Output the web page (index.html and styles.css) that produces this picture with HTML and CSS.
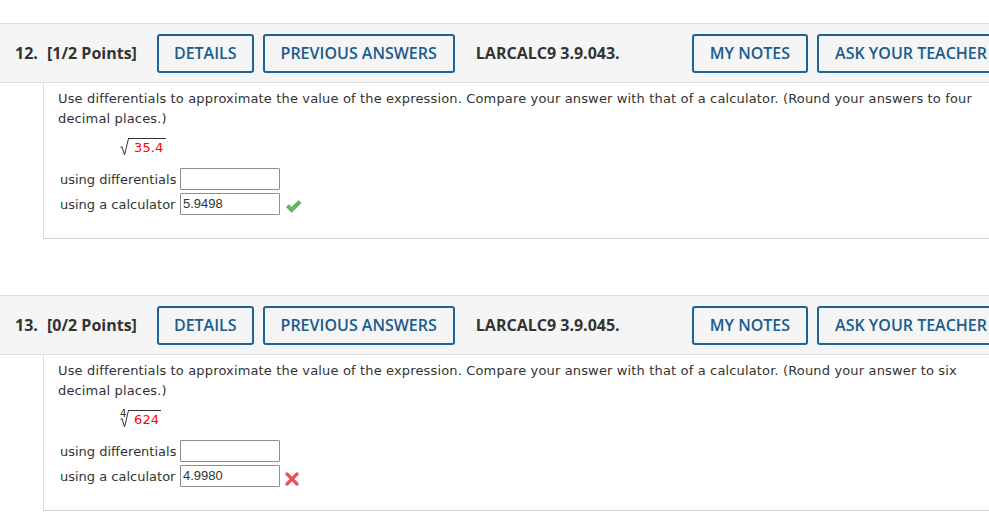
FILE: index.html
```html
<!DOCTYPE html>
<html>
<head>
<meta charset="utf-8">
<link rel="stylesheet" href="styles.css">
</head>
<body>
<div class="page">
  <section class="question q12">
    <div class="qhead">
      <span class="qnum">12.</span>
      <span class="qpts">[1/2 Points]</span>
      <button class="btn btn-details">DETAILS</button>
      <button class="btn">PREVIOUS ANSWERS</button>
      <span class="qcode">LARCALC9 3.9.043.</span>
      <div class="right">
        <button class="btn">MY NOTES</button>
        <button class="btn">ASK YOUR TEACHER</button>
      </div>
    </div>
    <div class="qbody">
      <p class="prompt">Use differentials to approximate the value of the expression. Compare your answer with that of a calculator. (Round your answers to four decimal places.)</p>
      <div class="math">
        <span class="root"><span class="idx"></span><svg class="rad" width="9" height="18" viewBox="0 0 9 18"><path d="M0.5 9.5 L2 8.5 L4.5 17 L8.5 0.5" fill="none" stroke="#333" stroke-width="1"/></svg><span class="radicand">35.4</span></span>
      </div>
      <div class="answers">
        <div class="arow"><span class="alabel">using differentials</span><span class="ainput"></span></div>
        <div class="arow"><span class="alabel">using a calculator</span><span class="ainput">5.9498</span>
          <svg class="mark" width="17" height="13" viewBox="0 0 17 13"><path d="M1.5 7 L4 4.8 L6.5 7.5 L13.5 0.8 L16 3 L6.5 12.2 Z" fill="#66b866" stroke="#4b9a4b" stroke-width="0.8" stroke-linejoin="round"/></svg>
        </div>
      </div>
    </div>
  </section>

  <section class="question q13">
    <div class="qhead">
      <span class="qnum">13.</span>
      <span class="qpts">[0/2 Points]</span>
      <button class="btn btn-details">DETAILS</button>
      <button class="btn">PREVIOUS ANSWERS</button>
      <span class="qcode">LARCALC9 3.9.045.</span>
      <div class="right">
        <button class="btn">MY NOTES</button>
        <button class="btn">ASK YOUR TEACHER</button>
      </div>
    </div>
    <div class="qbody">
      <p class="prompt">Use differentials to approximate the value of the expression. Compare your answer with that of a calculator. (Round your answer to six decimal places.)</p>
      <div class="math">
        <span class="root"><span class="idx">4</span><svg class="rad" width="9" height="18" viewBox="0 0 9 18"><path d="M0.5 9.5 L2 8.5 L4.5 17 L8.5 0.5" fill="none" stroke="#333" stroke-width="1"/></svg><span class="radicand">624</span></span>
      </div>
      <div class="answers">
        <div class="arow"><span class="alabel">using differentials</span><span class="ainput"></span></div>
        <div class="arow"><span class="alabel">using a calculator</span><span class="ainput">4.9980</span>
          <svg class="mark cross" width="14" height="14" viewBox="0 0 14 14"><path d="M2 2 L12 12 M12 2 L2 12" stroke="#e9505a" stroke-width="3.2" stroke-linecap="round"/></svg>
        </div>
      </div>
    </div>
  </section>
</div>
</body>
</html>
```
FILE: styles.css
```css
html, body {
  margin: 0;
  padding: 0;
  background: #fff;
  overflow: hidden;
}
.page {
  width: 1014px;
  padding-top: 23px;
}
.question {
  margin-bottom: 56px;
}
.qhead {
  display: flex;
  align-items: center;
  height: 58px;
  background: #f5f5f5;
  border-top: 1px solid #dedede;
  border-bottom: 1px solid #dedede;
  padding-left: 15px;
  font-family: "Open Sans", sans-serif;
  font-weight: 700;
  font-size: 16px;
  color: #333;
  box-sizing: content-box;
}
.qnum {
  width: 32px;
}
.qpts {
  margin-right: 20px;
}
.btn {
  height: 39px;
  box-sizing: border-box;
  border: 2px solid #1b6399;
  border-radius: 3px;
  background: #f5f5f5;
  color: #1c5b8c;
  font-family: "Open Sans", sans-serif;
  font-weight: 600;
  font-size: 16px;
  padding: 0 16px;
  margin: 0 9px 0 0;
  white-space: nowrap;
}
.btn-details {
  padding: 0 15px;
}
.qcode {
  margin-left: 12px;
}
.right {
  display: flex;
  margin-left: auto;
}
.qbody {
  margin-left: 43px;
  border-left: 1px solid #dcdcdc;
  border-bottom: 1px solid #d0d0d0;
  padding: 6px 0 20px 14px;
  font-family: "DejaVu Sans", Verdana, sans-serif;
  font-size: 13px;
  letter-spacing: 0.15px;
  color: #333;
}
.prompt {
  margin: 0;
  line-height: 20px;
  width: 925px;
}
.math {
  height: 22px;
  margin: 8px 0 0 62px;
  display: flex;
  align-items: flex-start;
}
.root {
  display: inline-flex;
  align-items: flex-start;
  position: relative;
}
.idx {
  font-size: 10px;
  line-height: 9px;
  width: 0;
  margin-left: 0;
  margin-top: 0;
  color: #333;
}
.rad {
  display: block;
  margin-top: 1px;
}
.radicand {
  color: #f00;
  border-top: 1px solid #333;
  padding: 1px 2px 0 6px;
  margin-left: -1px;
  margin-top: 1px;
  line-height: 15px;
}
.answers {
  margin-top: 9px;
  padding-left: 2px;
}
.arow {
  display: flex;
  align-items: center;
  height: 22px;
  margin-bottom: 3px;
}
.alabel {
  width: 120px;
  letter-spacing: 0;
}
.ainput {
  box-sizing: border-box;
  width: 100px;
  height: 22px;
  border: 1px solid #8d8d99;
  border-radius: 1px;
  font-family: "Liberation Sans", Arial, sans-serif;
  font-size: 13px;
  letter-spacing: 0;
  color: #333;
  padding: 2px 0 0 2px;
  line-height: 16px;
}
.mark {
  margin-left: 5px;
  margin-top: 4px;
}
.cross {
  margin-top: 6px;
}
```
